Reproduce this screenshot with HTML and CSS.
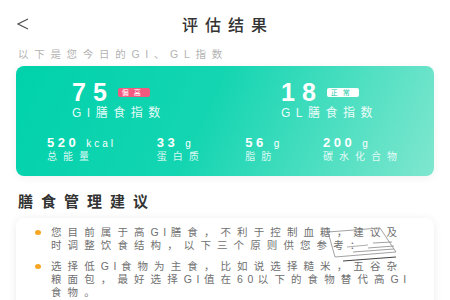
FILE: index.html
```html
<!DOCTYPE html>
<html lang="zh-CN">
    <head>
        <meta charset="utf-8">
        <link rel="stylesheet" href="styles.css">
    </head>
    <body>
        <div class="header">
            <svg class="back" width="12" height="12" viewBox="0 0 12 12">
                <polyline points="11,1 1,6 11,11" fill="none" stroke="#555" stroke-width="1.3"/>
            </svg>
            <h1>评估结果</h1>
        </div>

        <p class="subtitle">以下是您今日的GI、GL指数</p>

        <div class="score-card">
            <div class="scores">
                <div class="score">
                    <div class="score-top">
                        <span class="num">75</span>
                        <span class="badge high">偏高</span>
                    </div>
                    <div class="score-label">GI膳食指数</div>
                </div>
                <div class="score">
                    <div class="score-top">
                        <span class="num">18</span>
                        <span class="badge normal">正常</span>
                    </div>
                    <div class="score-label">GL膳食指数</div>
                </div>
            </div>

            <div class="stats">
                <div class="stat">
                    <div class="stat-val">520 <span class="unit">kcal</span></div>
                    <div class="stat-name">总能量</div>
                </div>
                <div class="stat">
                    <div class="stat-val">33 <span class="unit">g</span></div>
                    <div class="stat-name">蛋白质</div>
                </div>
                <div class="stat">
                    <div class="stat-val">56 <span class="unit">g</span></div>
                    <div class="stat-name">脂肪</div>
                </div>
                <div class="stat">
                    <div class="stat-val">200 <span class="unit">g</span></div>
                    <div class="stat-name">碳水化合物</div>
                </div>
            </div>
        </div>

        <h2>膳食管理建议</h2>

        <div class="advice">
            <div class="tip">
                <span class="dot"></span>
                <p>您目前属于高<span class="en">GI</span>膳食，不利于控制血糖，建议及时调整饮食结构，以下三个原则供您参考：</p>
            </div>
            <div class="tip">
                <span class="dot"></span>
                <p>选择低<span class="en">GI</span>食物为主食，比如说选择糙米，五谷杂粮面包，最好选择<span class="en">GI</span>值在<span class="en">60</span>以下的食物替代高<span class="en">GI</span>食物。</p>
            </div>

            <!-- sketch stamp lying over the text -->
            <svg class="stamp" width="90" height="45" viewBox="0 0 90 45">
                <polygon points="18,10 70,6 86,30 25,35" fill="none" stroke="#8a8a8a" stroke-width="0.8"/>
                <line x1="37" y1="25" x2="58" y2="23" stroke="#999" stroke-width="0.8"/>
                <line x1="63" y1="21" x2="82" y2="20" stroke="#888" stroke-width="0.8"/>
                <line x1="58" y1="26" x2="84" y2="24" stroke="#888" stroke-width="0.8"/>
                <line x1="43" y1="30" x2="84" y2="27" stroke="#888" stroke-width="0.8"/>
                <line x1="33" y1="39" x2="86" y2="35" stroke="#444" stroke-width="1.2"/>
            </svg>
        </div>
    </body>
</html>
```

FILE: styles.css
```css
body {
    margin: 0;
    background-color: #ffffff;
    font-family: "Liberation Sans", "Noto Sans CJK SC", sans-serif;
    color: #333;
}

.header {
    position: relative;
    display: flex;
    align-items: center;
    justify-content: center;
    height: 48px;
}

.back {
    position: absolute;
    left: 17px;
    top: 18px;
}

h1 {
    margin: 0 0 0 6px;
    font-size: 16px;
    font-weight: 500;
    letter-spacing: 7px;
    color: #333;
}

.subtitle {
    margin: 0 18px;
    font-size: 10.5px;
    line-height: 12px;
    letter-spacing: 5.7px;
    color: #b3b3b3;
}

.score-card {
    margin: 6px 16px 0;
    height: 110px;
    padding: 15px 31px 0;
    box-sizing: border-box;
    border-radius: 8px;
    background: linear-gradient(115deg, #00d2ac 0%, #14d5b1 45%, #7fe7cf 100%);
    box-shadow: 0 2px 8px rgba(0, 0, 0, 0.06);
    color: #fff;
}

.scores {
    display: grid;
    grid-template-columns: 1fr 1fr;
    margin: 0 -31px;
}

.score {
    padding-left: 56px;
}

.score-top {
    display: flex;
    align-items: center;
    height: 22px;
}

.num {
    font-size: 25px;
    line-height: 22px;
    font-weight: 700;
    letter-spacing: 7px;
}

.badge {
    margin-left: 4px;
    padding: 0 4px;
    height: 9px;
    line-height: 9px;
    font-size: 7px;
    letter-spacing: 5px;
    border-radius: 2px;
}

.high {
    background-color: #f25a80;
    color: #fff;
}

.normal {
    background-color: #fff;
    color: #1ccaa6;
}

.score-label {
    margin-top: 3px;
    font-size: 12px;
    line-height: 14px;
    letter-spacing: 5.5px;
    color: rgba(255, 255, 255, 0.92);
}

.stats {
    display: flex;
    justify-content: space-between;
    margin-top: 16px;
}

.stat-val {
    font-size: 13px;
    line-height: 14px;
    font-weight: 700;
    letter-spacing: 3.5px;
}

.unit {
    font-size: 10px;
    font-weight: 400;
    letter-spacing: 3px;
}

.stat-name {
    font-size: 10px;
    line-height: 12px;
    letter-spacing: 6px;
    color: rgba(255, 255, 255, 0.85);
}

h2 {
    margin: 16px 18px 0;
    font-size: 15px;
    line-height: 20px;
    font-weight: 700;
    letter-spacing: 8px;
    color: #333;
}

.advice {
    position: relative;
    margin: 6px 16px 0;
    padding: 8px 21.5px 20px 19px;
    border-radius: 8px;
    background-color: #fff;
    box-shadow: 0 1px 8px rgba(0, 0, 0, 0.08);
}

.tip {
    display: flex;
    align-items: flex-start;
    margin-bottom: 8px;
}

.dot {
    flex: none;
    width: 6px;
    height: 5px;
    margin: 4px 10px 0 0;
    border-radius: 50%;
    background-color: #f6a623;
}

.tip p {
    margin: 0;
    font-size: 10.5px;
    line-height: 13px;
    letter-spacing: 6.1px;
    color: #707070;
}

.tip .en {
    letter-spacing: 4.5px;
}

.stamp {
    position: absolute;
    left: 294px;
    top: 4px;
}
```
